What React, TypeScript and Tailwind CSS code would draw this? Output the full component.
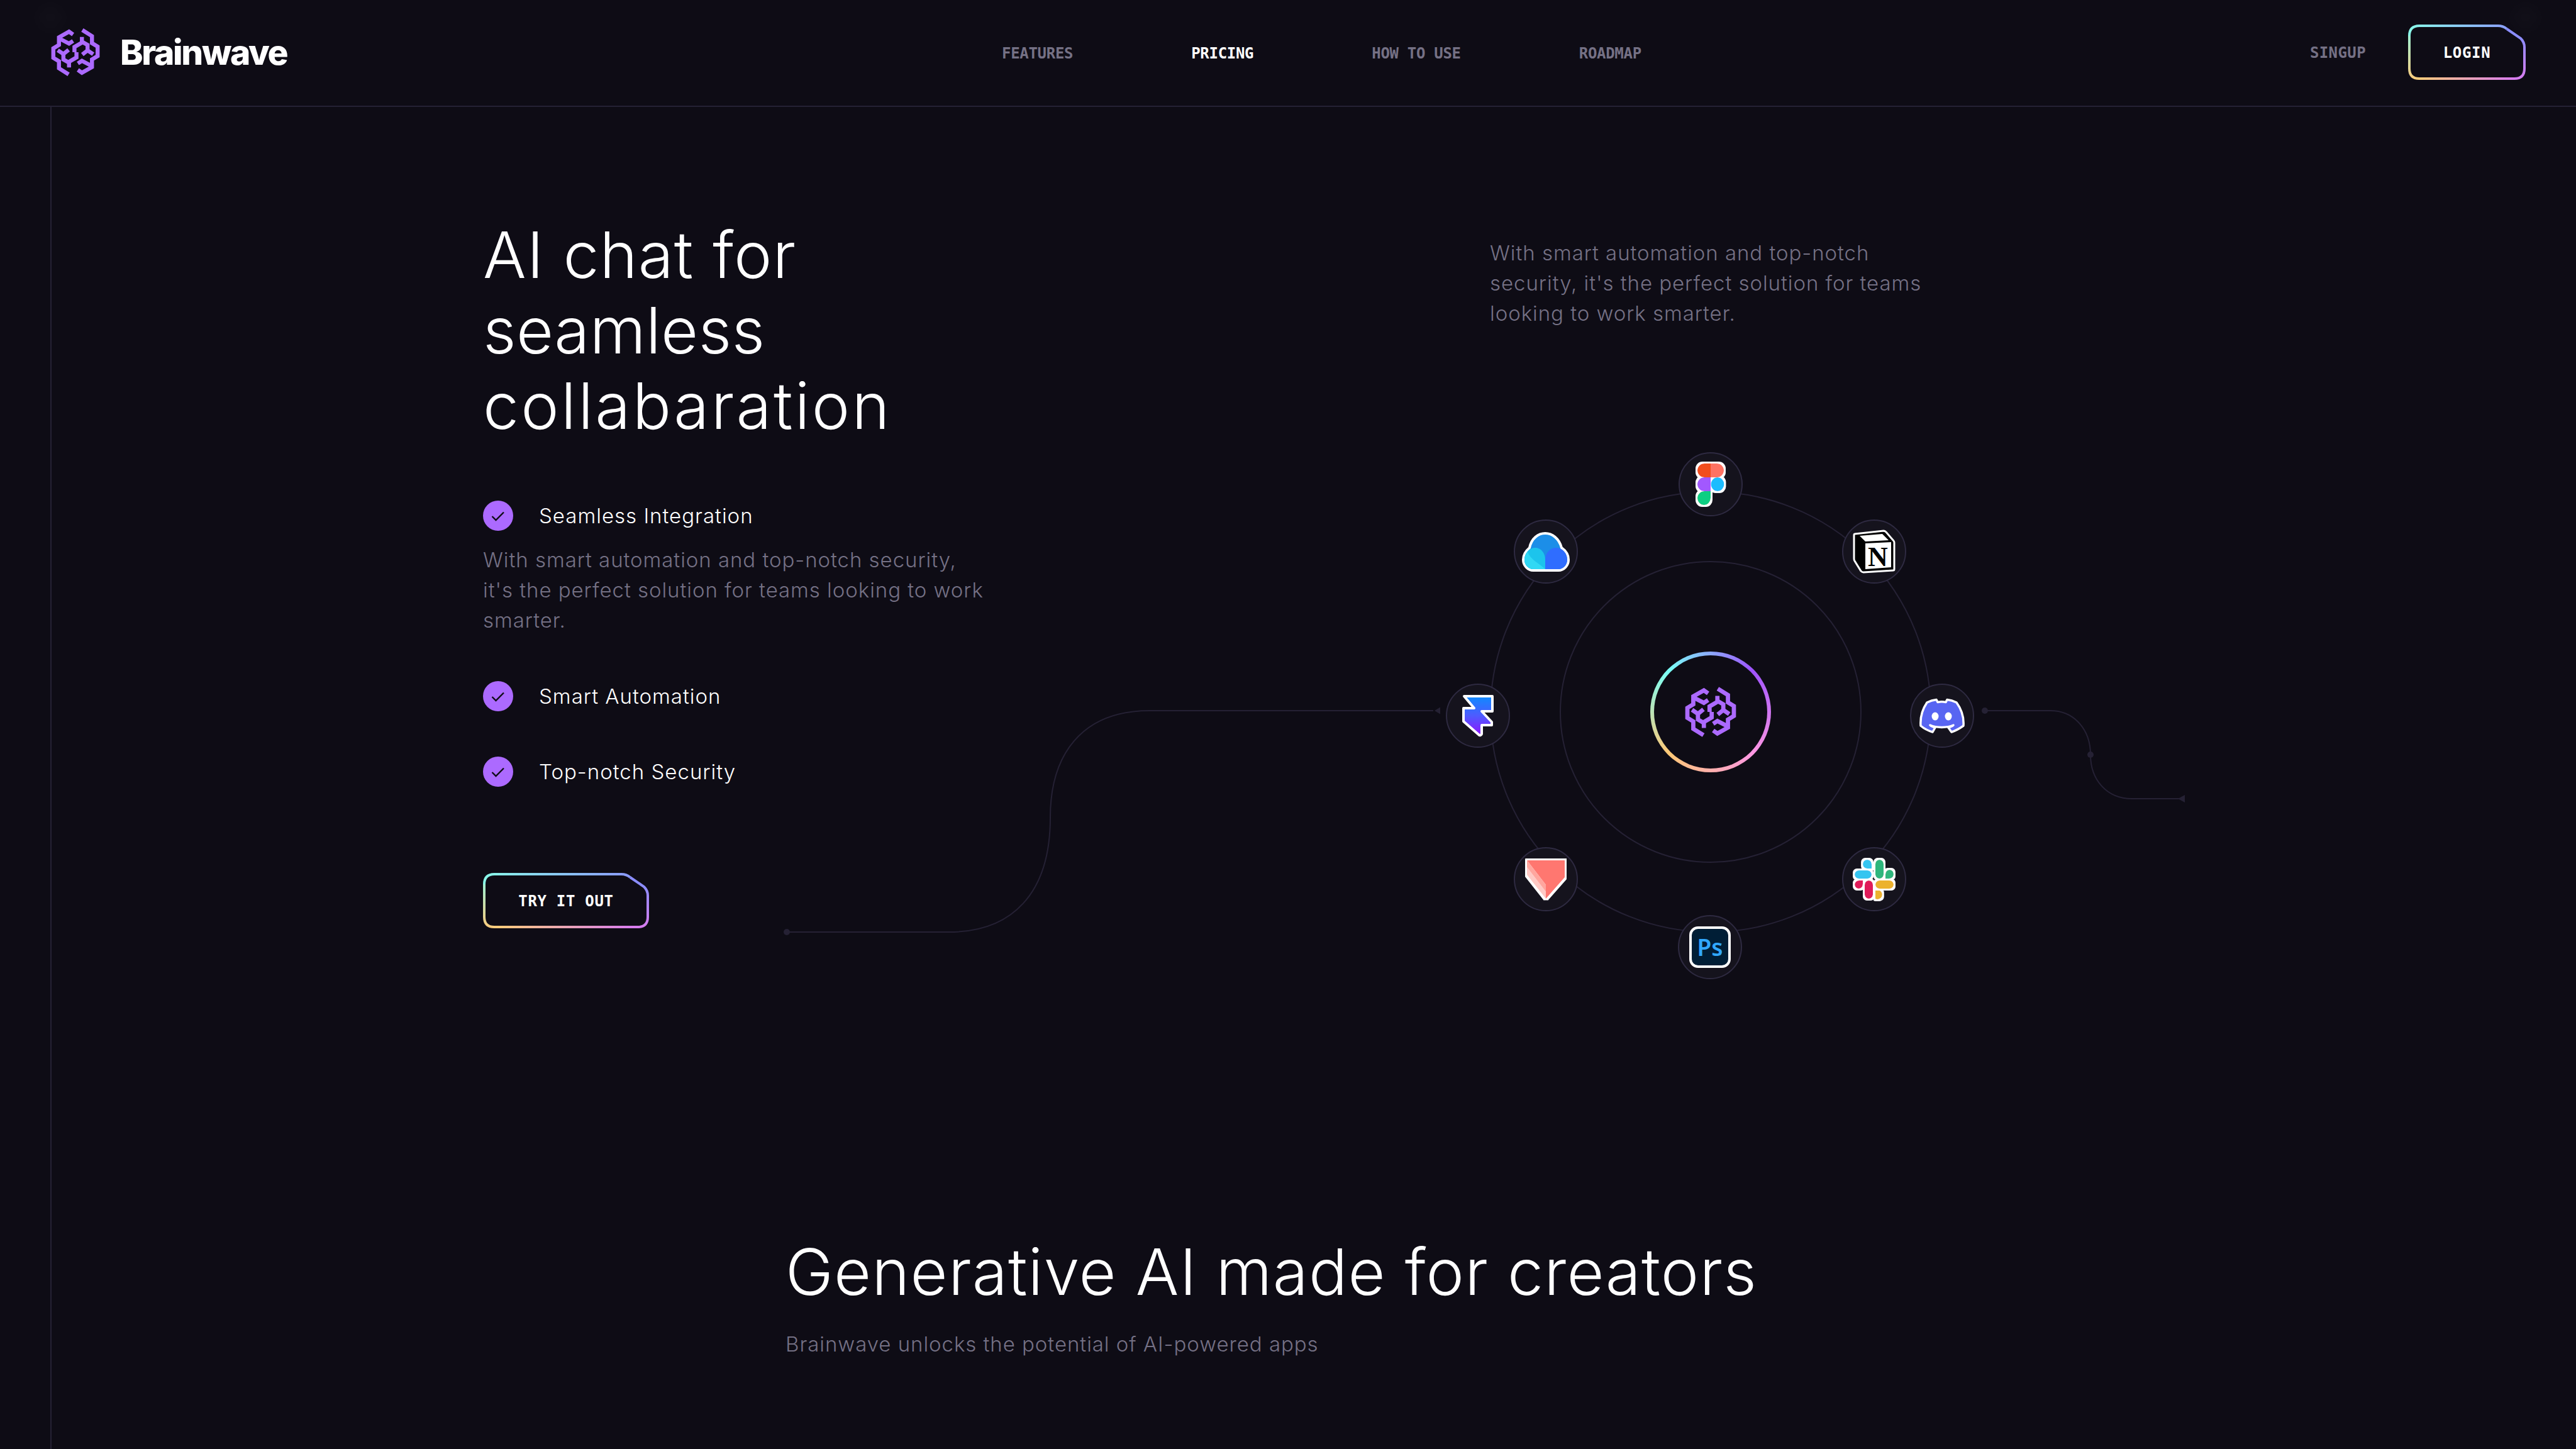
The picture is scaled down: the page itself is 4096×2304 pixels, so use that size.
const sora = "font-['Inter',sans-serif]";
const mono = "font-['DejaVu_Sans_Mono',monospace]";
const body = "text-[33px] font-light leading-[48px] tracking-[0.95px] text-[#757185]";
const itemTitle = "text-[33px] font-light leading-[48px] tracking-[1px]";

function Brain({ className }: { className?: string }) {
  const half = (
    <g fill="none" stroke="#AC6AFF" strokeWidth="20" strokeLinejoin="miter" strokeLinecap="butt">
      <polyline points="-12,-88 -32,-102 -82,-74 -82,-36 -110,-19 -110,28 -82,45 -82,80 -34,110" />
      <polyline points="-80,-68 -32,-43 -12,-56" />
      <polyline points="-88,-10 -60,9 -34,-12" />
      <polyline points="-60,9 -60,36 -32,52 -32,76" />
      <polyline points="5,0 5,26 -36,50" />
    </g>
  );
  return (
    <svg viewBox="-125 -125 250 250" className={className}>
      {half}
      <g transform="rotate(180)">{half}</g>
    </svg>
  );
}

function GradientButton({ w, label }: { w: number; label: string }) {
  const h = 88;
  const id = label.replace(/\s/g, "");
  const c = w - 44;
  return (
    <a className={`relative flex h-[88px] items-center justify-center text-[24px] leading-none font-bold tracking-[0.7px] text-white ${mono}`} style={{ width: w }}>
      <svg className="absolute inset-0" width={w} height={h} fill="none">
        <defs>
          <linearGradient id={`${id}t`} gradientUnits="userSpaceOnUse" x1="0" y1="0" x2={w} y2="0">
            <stop stopColor="#89F9E8" />
            <stop offset="1" stopColor="#8B8DFF" />
          </linearGradient>
          <linearGradient id={`${id}r`} gradientUnits="userSpaceOnUse" x1="0" y1="20" x2="0" y2={h}>
            <stop stopColor="#8B8DFF" />
            <stop offset="1" stopColor="#D87CEE" />
          </linearGradient>
          <linearGradient id={`${id}b`} gradientUnits="userSpaceOnUse" x1="0" y1="0" x2={w} y2="0">
            <stop offset="0.1" stopColor="#FACB7B" />
            <stop offset="0.9" stopColor="#D87CEE" />
          </linearGradient>
          <linearGradient id={`${id}l`} gradientUnits="userSpaceOnUse" x1="0" y1="0" x2="0" y2={h}>
            <stop stopColor="#89F9E8" />
            <stop offset="1" stopColor="#FACB7B" />
          </linearGradient>
        </defs>
        <g strokeWidth="4">
          <path stroke={`url(#${id}t)`} d={`M2 18 Q2 2 18 2 H${c} Q${c + 8} 2 ${c + 14} 7`} />
          <path stroke={`url(#${id}r)`} d={`M${c + 14} 7 L${w - 8} 22 Q${w - 2} 28 ${w - 2} 36 V${h - 18} Q${w - 2} ${h - 2} ${w - 18} ${h - 2}`} />
          <path stroke={`url(#${id}b)`} d={`M18 ${h - 2} H${w - 18}`} />
          <path stroke={`url(#${id}l)`} d={`M2 18 V${h - 18} Q2 ${h - 2} 18 ${h - 2}`} />
        </g>
      </svg>
      <span className="relative pt-[2px]">{label}</span>
    </a>
  );
}

function Check() {
  return (
    <span className="flex h-12 w-12 shrink-0 items-center justify-center rounded-full bg-[#AC6AFF]">
      <svg width="24" height="24" viewBox="0 0 24 24" fill="none" stroke="#0E0C15" strokeWidth="2.4">
        <path d="M2.5 13 L8.5 19 L21 6.5" />
      </svg>
    </span>
  );
}

// white sticker edge round the multi-part logos
function Sticker({ id, r }: { id: string; r: number }) {
  return (
    <filter id={id} x="-15%" y="-15%" width="130%" height="130%">
      <feMorphology in="SourceAlpha" operator="dilate" radius={r} result="fat" />
      <feFlood floodColor="#fff" />
      <feComposite in2="fat" operator="in" result="edge" />
      <feMerge>
        <feMergeNode in="edge" />
        <feMergeNode in="SourceGraphic" />
      </feMerge>
    </filter>
  );
}

const FigmaIcon = (
  <svg width="50" height="72" viewBox="0 0 50 72">
    <defs>
      <Sticker id="figmaEdge" r={2.5} />
    </defs>
    <g filter="url(#figmaEdge)">
      <path fill="#F24E1E" d="M4 14 A11 11 0 0 1 15 3 H25 V25 H15 A11 11 0 0 1 4 14Z" />
      <path fill="#FF7262" d="M25 3 H35 A11 11 0 0 1 35 25 H25Z" />
      <path fill="#A259FF" d="M4 36 A11 11 0 0 1 15 25 H25 V47 H15 A11 11 0 0 1 4 36Z" />
      <ellipse cx="36" cy="36" rx="10.500" ry="11" fill="#1ABCFE" />
      <path fill="#0ACF83" d="M4 58 A11 11 0 0 1 15 47 H25 V58 A10.500 11 0 0 1 4 58Z" />
    </g>
  </svg>
);

const NotionIcon = (
  <svg width="68" height="70" viewBox="0 0 68 70">
    <path fill="#000" stroke="#fff" strokeWidth="3" d="M3 7 L49 2 Q51 2 53 4 L65 18 Q66 19 66 21 V63 Q66 65 64 65 L17 68 Q15 68 13 66 L3 50 Q2 49 2 46 V9 Q2 7 3 7Z" />
    <path fill="#fff" d="M11 10 L47 7 L57 17 L20 19Z" />
    <path fill="#fff" d="M20 22 L61 20 V60 L20 63Z" />
    <text x="40" y="58" textAnchor="middle" fontFamily="'Liberation Serif',serif" fontWeight="700" fontSize="44" fill="#000">N</text>
  </svg>
);

const CloudIcon = (
  <svg width="76" height="63" viewBox="0 0 76 63">
    <path fill="#1C8EE8" stroke="#fff" strokeWidth="4" d="M37 2 C26 2 15 10 12 25 C6 30 2 37 2 44 C2 53 9 61 18 61 H58 C67 61 74 53 74 44 C74 37 70 30 63 25 C59 10 48 2 37 2Z" />
    <path fill="#1CC4EC" d="M37 59 H18 C10 59 4 52 4 44 C4 33 12 25 21 25 C30 25 37 33 37 44Z" />
    <path fill="#2F6DFF" d="M37 59 H58 C66 59 72 52 72 44 C72 33 64 25 54 25 C45 25 37 33 37 44Z" />
    <path fill="#30D8F4" d="M37 59 H18 C10 59 4 52 4 44 C4 40 6 35 9 31 C13 44 27 49 37 59Z" />
  </svg>
);

const FramerIcon = (
  <svg width="52" height="70" viewBox="0 0 52 70">
    <defs>
      <linearGradient id="framerFill" x1="0" y1="0" x2="0" y2="1">
        <stop stopColor="#0E8BFF" />
        <stop offset="0.5" stopColor="#4E5BFF" />
        <stop offset="1" stopColor="#9013FF" />
      </linearGradient>
    </defs>
    <path fill="url(#framerFill)" stroke="#fff" strokeWidth="4" strokeLinejoin="round" d="M4 4 H49 V28 H32 L48 45 V50 H32 V64 Q30 68 27 65 L3 44 V23 H20Z" />
  </svg>
);

const DiscordIcon = (
  <svg width="72" height="56" viewBox="0 0 72 56">
    <path fill="#5865F2" stroke="#fff" strokeWidth="3.500" strokeLinejoin="round" d="M59 7 C54 4.500 49 3 44 2.500 L42 6.500 C37 5.500 34 5.500 29 6.500 L27 2.500 C22 3 17 4.500 12 7 C4 19 1 31 2 44 C8 49 14 52 21 54 L25 47 C22 46 19 45 17 43 C27 47.500 44 47.500 54 43 C52 45 49 46 46 47 L51 54 C57 52 63 49 70 44 C71 30 67 18 59 7Z" />
    <ellipse cx="25" cy="29" rx="5.500" ry="6.500" fill="#fff" />
    <ellipse cx="46" cy="29" rx="5.500" ry="6.500" fill="#fff" />
  </svg>
);

const SlackIcon = (
  <svg width="70" height="70" viewBox="0 0 70 70">
    <defs>
      <Sticker id="slackEdge" r={2.5} />
    </defs>
    <g filter="url(#slackEdge)">
      <path fill="#36C5F0" d="M24 4 A7 7 0 0 1 31 11 V18 H24 A7 7 0 0 1 24 4Z" />
      <rect x="4" y="21" width="27" height="13" rx="6.500" fill="#36C5F0" />
      <rect x="37" y="4" width="13" height="30" rx="6.500" fill="#2EB67D" />
      <path fill="#2EB67D" d="M66 27 A7 7 0 0 1 59 34 H53 V27 A6.500 7 0 0 1 66 27Z" />
      <path fill="#E01E5A" d="M4 43 A7 7 0 0 1 11 37 H17 V43 A6.500 7 0 0 1 4 43Z" />
      <rect x="20" y="37" width="13" height="29" rx="6.500" fill="#E01E5A" />
      <rect x="37" y="37" width="29" height="13" rx="6.500" fill="#ECB22E" />
      <path fill="#ECB22E" d="M37 53 H44 A6.500 6.500 0 0 1 37 66Z" />
    </g>
  </svg>
);

const PsIcon = (
  <svg width="66" height="66" viewBox="0 0 66 66">
    <rect x="2" y="2" width="62" height="62" rx="12" fill="#001E36" stroke="#fff" strokeWidth="4" />
    <text x="33" y="47" textAnchor="middle" fontFamily="'Noto Sans',sans-serif" fontWeight="600" fontSize="37" fill="#31A8FF">Ps</text>
  </svg>
);

const ProtoIcon = (
  <svg width="68" height="68" viewBox="0 0 68 68">
    <defs>
      <Sticker id="protoEdge" r={2.5} />
    </defs>
    <g filter="url(#protoEdge)">
      <path fill="#FFC9C4" d="M4 27 L34 65 V54 L4 15Z" />
      <path fill="#FFA69E" d="M4 15 L34 54 V43 L4 4Z" />
      <path fill="#FF776F" d="M4 4 H64 V31 L34 65 V43Z" />
    </g>
  </svg>
);

const nodes = [
  { cls: "left-[298px] top-[-64px]", icon: FigmaIcon },
  { cls: "left-[36px] top-[43px]", icon: CloudIcon },
  { cls: "left-[558px] top-[43px]", icon: NotionIcon },
  { cls: "left-[-72px] top-[304px]", icon: FramerIcon },
  { cls: "left-[666px] top-[304px]", icon: DiscordIcon },
  { cls: "left-[36px] top-[564px]", icon: ProtoIcon },
  { cls: "left-[558px] top-[564px]", icon: SlackIcon },
  { cls: "left-[297px] top-[672px]", icon: PsIcon },
];

function Orbit() {
  return (
    <div className="relative mt-[259px] h-[702px] w-[702px] rounded-full border-2 border-[#252134]">
      <div className="absolute left-[109px] top-[109px] flex h-[480px] w-[480px] items-center justify-center rounded-full border-2 border-[#252134]">
        <div className="flex h-[192px] w-[192px] items-center justify-center rounded-full bg-[conic-gradient(from_225deg,#FFC876,#79FFF7,#9F53FF,#FF98E2,#FFC876)] p-[6px]">
          <div className="flex h-full w-full items-center justify-center rounded-full bg-[#0E0C15]">
            <Brain className="h-[84px] w-[84px]" />
          </div>
        </div>
      </div>
      {nodes.map((n, i) => (
        <div key={i} className={`absolute flex h-[102px] w-[102px] items-center justify-center rounded-full border-2 border-[#2E2A41] bg-[#15131D] ${n.cls}`}>
          {n.icon}
        </div>
      ))}
      {/* connectors running off the ring */}
      <svg className="absolute left-[-1122px] top-[-2px] overflow-visible" width="1" height="1" fill="none" stroke="#252134" strokeWidth="2">
        <path d="M2 701 H260 C360 701 421 640 421 519 C421 420 470 349 579 349 H1030" />
        <circle cx="2" cy="701" r="5" fill="#252134" stroke="none" />
        <path d="M1032 349 L1041 343.500 V354.500Z" fill="#252134" stroke="none" />
        <path d="M1907 349 H2011 C2050 349 2075 380 2075 419 C2075 458 2100 489 2141 489 H2216" />
        <circle cx="1907" cy="349" r="5" fill="#252134" stroke="none" />
        <circle cx="2075" cy="419" r="5" fill="#252134" stroke="none" />
        <path d="M2214 489 L2225 483 V495Z" fill="#252134" stroke="none" />
      </svg>
    </div>
  );
}

export default function App() {
  const items = ["Smart Automation", "Top-notch Security"];
  return (
    <div className={`h-[2304px] w-[4096px] overflow-hidden bg-[#0E0C15] text-white ${sora}`}>
      <header className="relative flex h-[170px] items-center border-b-2 border-[#252134] pb-[2px] pl-[80px] pr-[80px]">
        <span className="absolute left-[56px] top-[4px] h-12 w-12 rounded-full bg-white/[0.015] blur-md" />
        <span className="absolute right-[56px] top-[4px] h-12 w-12 rounded-full bg-white/[0.015] blur-md" />
        <div className="flex w-[1513px] items-center gap-[31px]">
          <Brain className="h-[80px] w-[80px]" />
          <span className="text-[55px] font-extrabold leading-none tracking-[-2.3px] font-['Inter',sans-serif]">Brainwave</span>
        </div>
        <nav className={`flex gap-[188px] pt-[3px] text-[24px] font-bold leading-none tracking-[-0.3px] text-[#757185] ${mono}`}>
          <a>FEATURES</a>
          <a className="text-white">PRICING</a>
          <a>HOW TO USE</a>
          <a>ROADMAP</a>
        </nav>
        <div className="ml-auto flex items-center gap-[67px]">
          <a className={`pt-[2px] text-[24px] font-bold leading-none tracking-[0.4px] text-[#757185] ${mono}`}>SINGUP</a>
          <GradientButton w={187} label="LOGIN" />
        </div>
      </header>

      <main className="ml-[80px] h-[2134px] border-l-2 border-[#252134]">
        <section className="flex h-[1792px] pl-[686px]">
          <div className="w-[1601px] pt-[175px]">
            <h2 className="text-[102px] font-light leading-[120px]">
              <span className="block tracking-[1.1px]">AI chat for</span>
              <span className="block tracking-[0.3px]">seamless</span>
              <span className="block tracking-[3.3px]">collabaration</span>
            </h2>
            <div className="mt-[91px] flex items-center gap-[41px]">
              <Check />
              <h6 className={itemTitle}>Seamless Integration</h6>
            </div>
            <p className={`mt-[22px] ${body}`}>
              With smart automation and top-notch security,
              <br />
              it's the perfect solution for teams looking to work
              <br />
              smarter.
            </p>
            <div className="mt-[73px] flex flex-col gap-[72px]">
              {items.map((t) => (
                <div key={t} className="flex items-center gap-[41px]">
                  <Check />
                  <h6 className={itemTitle}>{t}</h6>
                </div>
              ))}
            </div>
            <div className="mt-[137px]">
              <GradientButton w={264} label="TRY IT OUT" />
            </div>
          </div>
          <div className="pt-[208px]">
            <p className={body}>
              With smart automation and top-notch
              <br />
              security, it's the perfect solution for teams
              <br />
              looking to work smarter.
            </p>
            <Orbit />
          </div>
        </section>
        <section className="pl-[1167px]">
          <h2 className="text-[102px] font-light leading-[120px] tracking-[1.2px]">Generative AI made for creators</h2>
          <p className={`mt-[31px] ${body}`}>Brainwave unlocks the potential of AI-powered apps</p>
        </section>
      </main>
    </div>
  );
}
